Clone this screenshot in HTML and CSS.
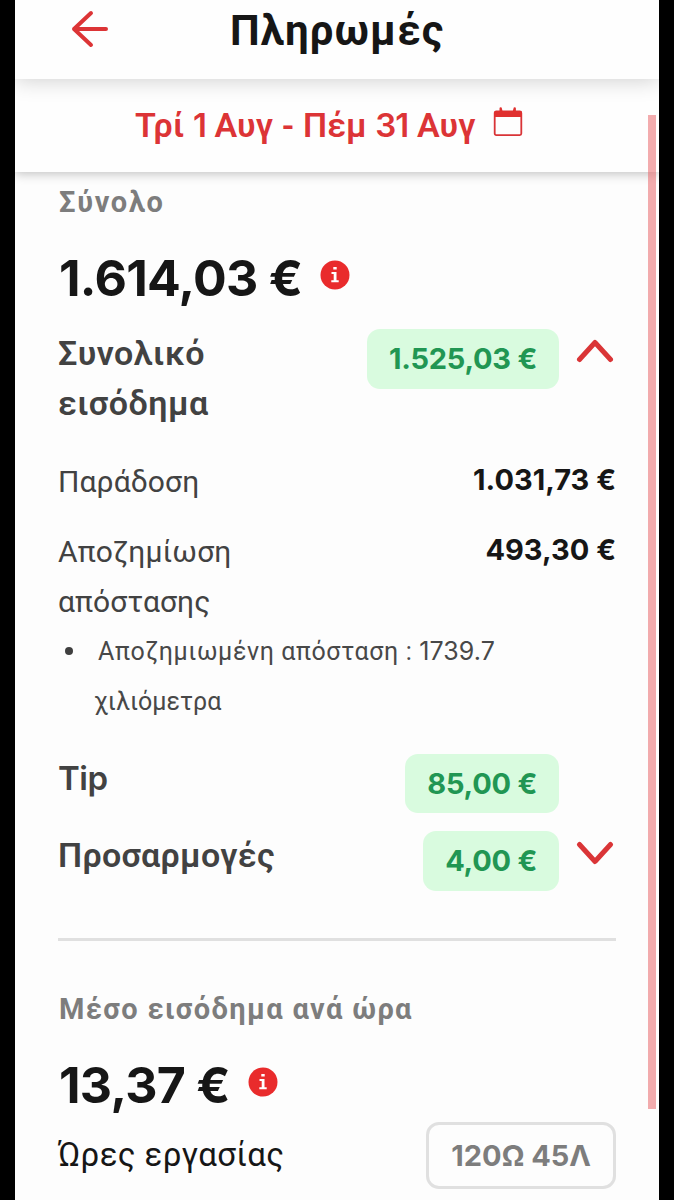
FILE: index.html
```html
<!DOCTYPE html>
<html lang="el">
<head>
<meta charset="utf-8">
<title>Πληρωμές</title>
<link rel="stylesheet" href="styles.css">
</head>
<body>
<div class="screen">
  <header class="topbar">
    <svg class="back" viewBox="0 0 38 38" width="38" height="38"><path d="M20 3 3 19 20 35M3 19H35" /></svg>
    <h1 class="title">Πληρωμές</h1>
  </header>
  <div class="range">
    <span class="range-text">Τρί <span class="digits">1</span> Αυγ - Πέμ <span class="digits">31</span> Αυγ</span>
    <svg class="calendar" viewBox="0 0 30 30" width="30" height="30"><rect x="1.700" y="4.500" width="26.600" height="23.600" rx="1.500" fill="none" stroke="#d93437" stroke-width="1.800"/><path d="M1 10V6a2 2 0 0 1 2-2H6.500V1.500a1.200 1.200 0 0 1 2.400 0L9.500 4H19.800L20.500 1.500a1.200 1.200 0 0 1 2.400 0V4H27a2 2 0 0 1 2 2V10Z" fill="#e0302f"/></svg>
  </div>
  <main class="content">
    <h2 class="label">Σύνολο</h2>
    <div class="total"><span class="sum">1.614,03 €</span><svg class="info" viewBox="0 0 30 30" width="30" height="30"><circle cx="15" cy="15" r="14.500"/><path d="M13.300 7h3.400v2.500h-3.400zM11.500 12h5v8.200h2.200v2h-7.400v-2h2.400v-6.200h-2.200z"/></svg></div>
    <div class="row income">
      <span class="name two-line">Συνολικό εισόδημα</span>
      <span class="badge">1.525,03 €</span>
      <svg class="chevron up" viewBox="0 0 38 26" width="38" height="26"><path d="M3.500 21.500 19 4.500 34.500 21.500"/></svg>
    </div>
    <div class="detail delivery"><span class="detail-name">Παράδοση</span><span class="amount">1.031,73 €</span></div>
    <div class="detail distance"><span class="detail-name">Αποζημίωση απόστασης</span><span class="amount">493,30 €</span></div>
    <ul class="notes"><li><span class="first">Αποζημιωμένη απόσταση : <span class="digits">1739.7</span></span><br><span class="second">χιλιόμετρα</span></li></ul>
    <div class="row tip">
      <span class="name latin">Tip</span>
      <span class="badge">85,00 €</span>
      <span class="chevron"></span>
    </div>
    <div class="row adjust">
      <span class="name adjust-name">Προσαρμογές</span>
      <span class="badge">4,00 €</span>
      <svg class="chevron down" viewBox="0 0 38 26" width="38" height="26"><path d="M3.500 4.500 19 21.500 34.500 4.500"/></svg>
    </div>
    <hr class="divider">
    <h2 class="label average">Μέσο εισόδημα ανά ώρα</h2>
    <div class="total hourly"><span class="sum">13,37 €</span><svg class="info" viewBox="0 0 30 30" width="30" height="30"><circle cx="15" cy="15" r="14.500"/><path d="M13.300 7h3.400v2.500h-3.400zM11.500 12h5v8.200h2.200v2h-7.400v-2h2.400v-6.200h-2.200z"/></svg></div>
    <div class="hours"><span class="hours-name">Ώρες εργασίας</span><span class="hours-box">120Ω 45Λ</span></div>
  </main>
  <div class="scrollbar"></div>
</div>
</body>
</html>
```
FILE: styles.css
```css
* { box-sizing: border-box; }
html, body { margin: 0; height: 1200px; overflow: hidden; background: #000; }
body { font-family: Inter, "Noto Sans", sans-serif; color: #161616; }
svg { display: block; flex: none; }
h1, h2, ul { margin: 0; padding: 0; }
span { white-space: nowrap; }

.title, .range-text, .label, .name, .detail-name, .notes, .hours-name { font-family: Roboto, "Noto Sans", sans-serif; }
.digits, .latin { font-family: Inter, sans-serif; }

.screen { position: relative; width: 644px; height: 1200px; margin-left: 15px; background: #fdfdfd; overflow: hidden; }

.topbar { position: relative; z-index: 2; display: flex; align-items: center; height: 79px; padding: 0 0 21px 56px; background: #fefefe; box-shadow: 0 2px 20px rgba(0, 0, 0, .18); }
.back { fill: none; stroke: #dc3436; stroke-width: 4; stroke-linecap: round; stroke-linejoin: round; }
.title { flex: 1; padding: 3px 0 0 121px; font-size: 42px; font-weight: 700; line-height: 60px; letter-spacing: 1.1px; }

.range { position: relative; z-index: 1; display: flex; align-items: flex-start; height: 93px; padding: 26px 0 0 120px; background: #fefefe; box-shadow: 0 2px 10px rgba(0, 0, 0, .24); color: #dc3436; }
.range-text { width: 358px; font-size: 34px; font-weight: 600; line-height: 40px; letter-spacing: .12px; }
.range-text .digits { font-size: 33px; letter-spacing: -1px; }
.calendar { margin-top: 2px; }

.content { padding: 10px 43px 0; }
.label { padding-left: 1px; font-size: 29px; font-weight: 700; line-height: 40px; letter-spacing: 1.7px; color: #7d7d7d; }
.total { display: flex; align-items: center; height: 60px; margin-top: 26px; padding-left: 1px; gap: 18px; }
.sum { font-size: 50px; font-weight: 700; line-height: 60px; letter-spacing: -.7px; }
.info { margin-top: -7px; }
.info circle { fill: #e92b2c; }
.info path { fill: #fff; }

.row { display: flex; align-items: flex-start; }
.name { flex: 1; font-size: 34px; font-weight: 600; line-height: 50px; letter-spacing: .5px; color: #424242; }
.latin { font-size: 33px; letter-spacing: -.5px; }
.adjust-name { letter-spacing: .3px; }
.income { height: 100px; margin-top: 20px; }
.two-line { padding-right: 120px; white-space: normal; }
.badge { height: 60px; margin-top: 1px; padding: 0 22px; border-radius: 13px; background: #d9fbdf; color: #219653; font-size: 29px; font-weight: 700; line-height: 60px; letter-spacing: -.25px; }
.chevron { width: 38px; margin: 10px 2px 0 17px; fill: none; stroke: #da3537; stroke-width: 5; stroke-linecap: round; stroke-linejoin: round; }

.detail { display: flex; justify-content: space-between; align-items: flex-start; }
.detail-name { width: 220px; padding-top: 1px; white-space: normal; font-size: 30px; line-height: 50px; letter-spacing: .1px; color: #424242; }
.amount { font-size: 29px; font-weight: 700; line-height: 47px; }
.delivery { height: 50px; margin-top: 28px; }
.distance { height: 100px; margin-top: 20px; }

.notes { height: 100px; list-style: none; color: #484848; font-size: 25px; line-height: 50px; }
.notes li { position: relative; padding-left: 36px; }
.notes li::before { content: ""; position: absolute; left: 7px; top: 21px; width: 8px; height: 8px; border-radius: 50%; background: #3f3f3f; }
.first { margin-left: 4px; letter-spacing: .6px; }
.first .digits { letter-spacing: .1px; }

.tip { height: 59px; margin-top: 27px; }
.tip .badge { height: 59px; line-height: 59px; }
.adjust { height: 60px; margin-top: 18px; }
.down { margin-top: 10px; }
.divider { height: 3px; margin: 48px 0 0; border: 0; background: #e0e0e0; }
.average { margin-top: 48px; letter-spacing: 1.35px; }
.hourly { margin-top: 26px; }
.hours { display: flex; justify-content: space-between; margin-top: 7px; }
.hours-name { font-size: 33px; line-height: 66px; letter-spacing: .35px; }
.hours-box { height: 67px; padding: 0 22px; border: 3px solid #e0e0e0; border-radius: 13px; color: #7d7d7d; font-size: 29px; font-weight: 700; line-height: 61px; }

.scrollbar { position: absolute; z-index: 3; top: 115px; right: 3px; width: 8px; height: 994px; background: rgba(232, 95, 100, .52); }
```
